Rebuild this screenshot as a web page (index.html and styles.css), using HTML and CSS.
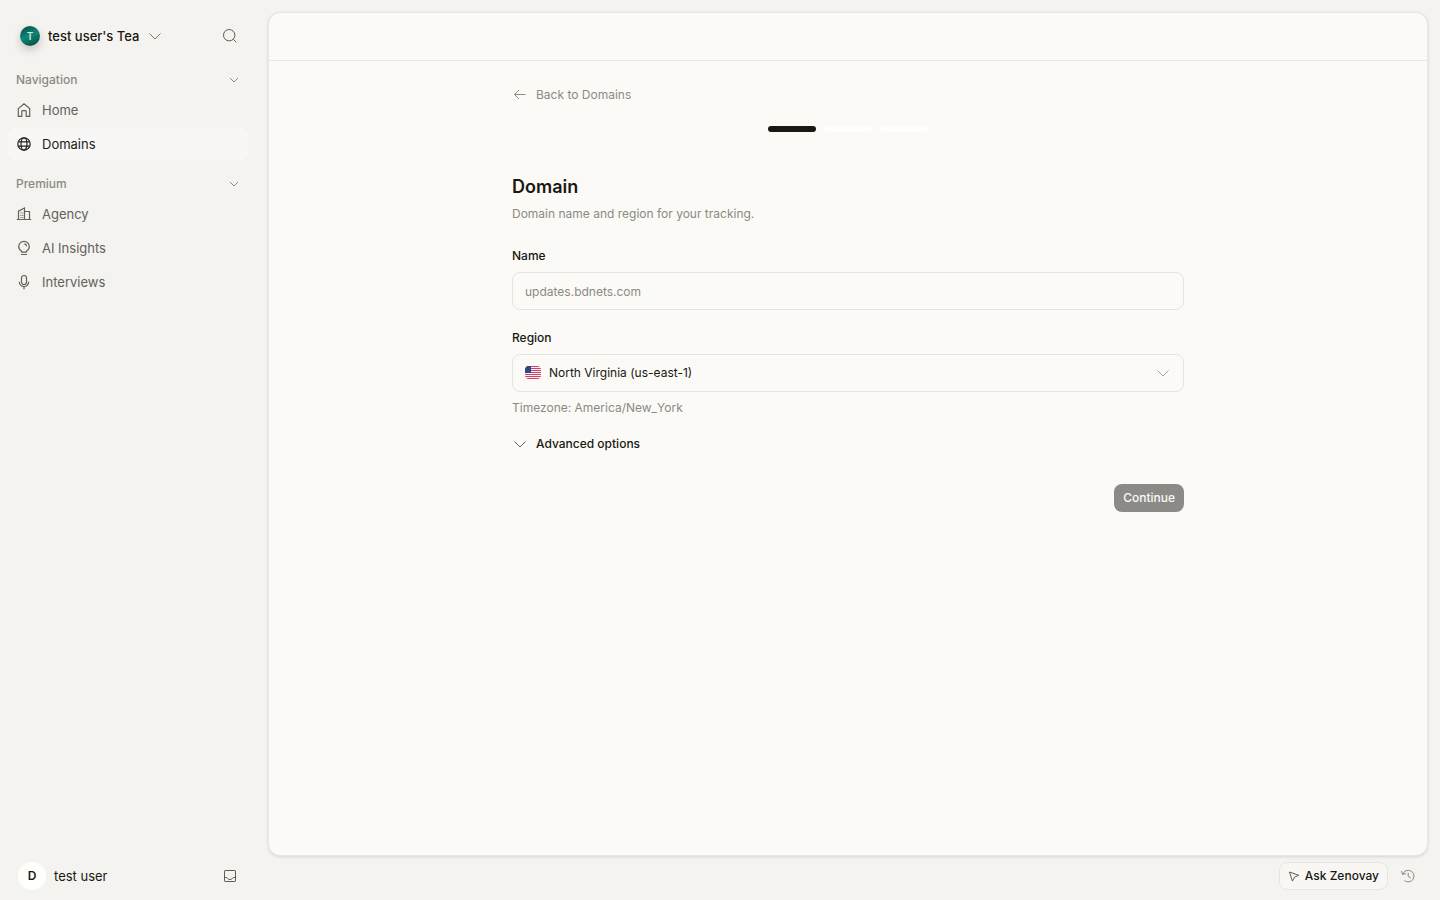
FILE: index.html
```html
<!DOCTYPE html>
<html lang="en">
<head>
    <meta charset="UTF-8">
    <meta name="viewport" content="width=device-width, initial-scale=1.0">
    <title>Domains</title>
    <link rel="stylesheet" href="styles.css">
</head>
<body>
    <div class="app">
        <aside class="sidebar">
            <div class="team">
                <button type="button" class="team-switch">
                    <span class="team-logo">T</span>
                    <span>test user's Tea</span>
                    <svg class="icon team-chevron" viewBox="0 0 16 16"><path d="M2.5 5.5 8 11l5.5-5.5"/></svg>
                </button>
                <button type="button" class="icon-button" aria-label="Search">
                    <svg class="icon" viewBox="0 0 16 16"><circle cx="7.2" cy="7.2" r="5.7"/><path d="m11.3 11.3 3 3"/></svg>
                </button>
            </div>
            <nav class="nav">
                <button type="button" class="nav-group">Navigation
                    <svg class="icon" viewBox="0 0 16 16"><path d="m4 6 4 4 4-4"/></svg>
                </button>
                <a class="nav-link" href="#">
                    <svg class="icon" viewBox="0 0 16 16"><path d="M2.3 6.6 8 1.700l5.700 4.900v7.700h-3.500V9.500a.8.8 0 0 0-.8-.8H6.600a.8.8 0 0 0-.8.800v4.800H2.300z"/></svg>
                    Home
                </a>
                <a class="nav-link active" href="#">
                    <svg class="icon" viewBox="0 0 16 16"><circle cx="8" cy="8" r="6.2"/><ellipse cx="8" cy="8" rx="3" ry="6.2"/><path d="M2.300 5.800h11.400M2.300 10.200h11.400"/></svg>
                    Domains
                </a>
                <button type="button" class="nav-group second">Premium
                    <svg class="icon" viewBox="0 0 16 16"><path d="m4 6 4 4 4-4"/></svg>
                </button>
                <a class="nav-link" href="#">
                    <svg class="icon" viewBox="0 0 16 16"><path d="M.8 13.500h14.400M2.500 13.500V5.200L8.500 2v11.500M8.500 5.500h5v8M4.500 7h1M6.300 7h1M4.500 9.500h1M6.300 9.500h1M4.500 11.500h1M6.300 11.500h1"/></svg>
                    Agency
                </a>
                <a class="nav-link" href="#">
                    <svg class="icon" viewBox="0 0 16 16"><path d="M5.800 12.200v-.9C4 10.400 2.700 8.700 2.700 6.600a5.300 5.300 0 0 1 10.600 0c0 2.100-1.300 3.800-3.100 4.700v.9zM5 14.500h6M8.300 3.800a2.700 2.700 0 0 1 2.400 2.400"/></svg>
                    AI Insights
                </a>
                <a class="nav-link" href="#">
                    <svg class="icon" viewBox="0 0 16 16"><rect x="5.500" y="1.500" width="5" height="9" rx="2.500"/><path d="M3.300 7.800a4.700 4.700 0 0 0 9.400 0M8 12.500v2.700"/></svg>
                    Interviews
                </a>
            </nav>
            <div class="account">
                <button type="button" class="account-button">
                    <span class="avatar">D</span>
                    <span>test user</span>
                </button>
                <button type="button" class="icon-button" aria-label="Inbox">
                    <svg class="icon" viewBox="0 0 16 16"><rect x="2.500" y="2.500" width="11" height="11" rx=".6"/><path d="M2.500 9.500h2.200c.6 0 .8 2 3.300 2s2.700-2 3.300-2h2.200"/></svg>
                </button>
            </div>
        </aside>
        <div class="content">
            <main class="panel">
                <header class="panel-header"></header>
                <form class="domain-form">
                    <a class="back-link" href="#">
                        <svg class="icon" viewBox="0 0 16 16"><path d="M13.500 7.500H2.500M7 3 2.500 7.500 7 12"/></svg>
                        Back to Domains
                    </a>
                    <div class="steps">
                        <span class="step done"></span>
                        <span class="step"></span>
                        <span class="step"></span>
                    </div>
                    <h1>Domain</h1>
                    <p class="intro">Domain name and region for your tracking.</p>
                    <div class="field">
                        <label for="name">Name</label>
                        <input type="text" id="name" name="name" placeholder="updates.bdnets.com">
                    </div>
                    <div class="field">
                        <label for="region">Region</label>
                        <div class="select-box">
                            <svg class="flag" viewBox="0 0 16 13">
                                <clipPath id="flagShape"><rect width="16" height="13" rx="4"/></clipPath>
                                <g clip-path="url(#flagShape)">
                                    <path fill="#f5f1f2" d="M0 0h16v13H0z"/>
                                    <path fill="#d0416a" d="M0 0h16v1H0zM0 2h16v1H0zM0 4h16v1H0zM0 6h16v1H0zM0 8h16v1H0zM0 10h16v1H0zM0 12h16v1H0z"/>
                                    <path fill="#2b4a7e" d="M0 0h6v7H0z"/>
                                </g>
                            </svg>
                            <select id="region" name="region">
                                <option>North Virginia (us-east-1)</option>
                            </select>
                            <svg class="icon select-chevron" viewBox="0 0 16 16"><path d="M2.500 5.500 8 11l5.500-5.500"/></svg>
                        </div>
                        <p class="hint">Timezone: America/New_York</p>
                    </div>
                    <button type="button" class="advanced">
                        <svg class="icon" viewBox="0 0 16 16"><path d="M2.500 5.500 8 11l5.500-5.500"/></svg>
                        Advanced options
                    </button>
                    <div class="actions">
                        <button type="submit" class="continue" disabled>Continue</button>
                    </div>
                </form>
            </main>
            <footer class="bottom-bar">
                <button type="button" class="ask">
                    <svg class="icon" viewBox="0 0 12 12"><path d="m1.500 2 9.300 3.300-4.200 1.800-2.200 4z"/></svg>
                    Ask Zenovay
                </button>
                <button type="button" class="icon-button history" aria-label="History">
                    <svg class="icon" viewBox="0 0 16 16"><path d="M2.700 6.200A5.800 5.800 0 1 1 4.500 12.600M1.500 3l1 3.500L6 5.600M8.200 4.800v3.700l2.600 1.500"/></svg>
                </button>
            </footer>
        </div>
    </div>
</body>
</html>
```

FILE: styles.css
```css
* {
    box-sizing: border-box;
}
body {
    margin: 0;
    background-color: #f4f3ef;
    color: #191813;
    font-family: Inter, "Liberation Sans", sans-serif;
    font-size: 12px;
    line-height: 20px;
}
button,
input,
select {
    font: inherit;
    color: inherit;
}
button {
    padding: 0;
    border: none;
    background: none;
    cursor: pointer;
}
a {
    text-decoration: none;
}
h1,
p {
    margin: 0;
}
.icon {
    width: 16px;
    height: 16px;
    flex: none;
    fill: none;
    stroke: currentColor;
    stroke-width: 1;
}
.app {
    display: flex;
    min-height: 100vh;
}

/* Sidebar */
.sidebar {
    display: flex;
    flex-direction: column;
    width: 256px;
    flex: none;
    padding: 20px 8px 10px;
    font-size: 13px;
}
.team,
.account {
    display: flex;
    align-items: center;
    justify-content: space-between;
    padding: 0 10px;
}
.team {
    height: 32px;
}
.team-switch {
    display: flex;
    align-items: center;
    gap: 8px;
    padding-left: 2px;
    font-weight: 500;
}
.team-logo {
    width: 20px;
    height: 20px;
    border-radius: 50%;
    background: linear-gradient(155deg, #064e46 5%, #128577 48%, #07483f 95%);
    box-shadow: 0 4px 10px rgba(0, 0, 0, 0.2);
    color: #c4e9df;
    font-size: 10px;
    font-weight: 600;
}
.team-chevron {
    color: #77766f;
}
.icon-button {
    display: flex;
    padding: 4px 0;
    color: #5e5d57;
}
.nav {
    flex: 1;
    padding-top: 16px;
}
.nav-group {
    display: flex;
    align-items: center;
    justify-content: space-between;
    width: 100%;
    height: 24px;
    margin-bottom: 2px;
    padding: 0 6px 0 8px;
    color: #8b8a85;
    font-size: 12px;
    font-weight: 500;
}
.nav-group.second {
    margin-top: 12px;
}
.nav-link {
    display: flex;
    align-items: center;
    gap: 10px;
    height: 32px;
    margin-bottom: 2px;
    padding: 0 8px;
    border-radius: 6px;
    color: #62615c;
}
.nav-link .icon {
    stroke-width: 1.2;
}
.nav-link.active {
    background-color: #f8f7f5;
    color: #22211c;
}
.account-button {
    display: flex;
    align-items: center;
    gap: 8px;
}
.avatar {
    width: 28px;
    height: 28px;
    border-radius: 50%;
    background-color: #fefefd;
    font-size: 12px;
    font-weight: 600;
    line-height: 28px;
}

/* Main panel */
.content {
    display: flex;
    flex-direction: column;
    flex: 1;
    padding: 12px 12px 8px;
}
.panel {
    flex: 1;
    border: 1px solid #e7e6e2;
    border-radius: 12px;
    background-color: #fbfaf6;
    box-shadow: 0 1px 3px rgba(0, 0, 0, 0.12);
}
.panel-header {
    height: 48px;
    border-bottom: 1px solid #e9e8e4;
}
.domain-form {
    display: flex;
    flex-direction: column;
    max-width: 672px;
    margin: 0 auto;
    padding: 24px 0;
}
.back-link {
    display: flex;
    align-items: center;
    align-self: flex-start;
    gap: 8px;
    color: #8b8a85;
}
.steps {
    display: flex;
    justify-content: center;
    gap: 8px;
    margin: 21px 0 41px;
}
.step {
    width: 48px;
    height: 6px;
    border-radius: 3px;
    background-color: #fefefd;
}
.step.done {
    background-color: #191813;
}
h1 {
    font-size: 18px;
    font-weight: 600;
    line-height: 28px;
}
.intro {
    margin: 3px 0 22px;
    color: #8b8a85;
}
.field {
    display: flex;
    flex-direction: column;
    gap: 6px;
    margin-bottom: 18px;
}
.field label {
    font-weight: 500;
}
.field input,
.field select {
    width: 100%;
    height: 38px;
    padding: 0 12px;
    border: 1px solid #e4e3df;
    border-radius: 8px;
    background-color: #fbfaf6;
}
.field input::placeholder {
    color: #8b8a85;
}
.select-box {
    position: relative;
}
.field select {
    display: block;
    appearance: none;
    padding: 0 36px;
}
.flag {
    position: absolute;
    top: 12px;
    left: 13px;
    width: 16px;
    height: 13px;
}
.select-chevron {
    position: absolute;
    top: 11px;
    right: 13px;
    color: #a5a49f;
    pointer-events: none;
}
.hint {
    color: #8b8a85;
}
.advanced {
    display: flex;
    align-items: center;
    align-self: flex-start;
    gap: 8px;
    margin-top: -2px;
    font-weight: 500;
}
.advanced .icon {
    color: #5e5d57;
}
.actions {
    display: flex;
    justify-content: flex-end;
    margin-top: 30px;
}
.continue {
    height: 28px;
    padding: 0 9px;
    border-radius: 8px;
    background-color: #8b8a86;
    color: #fbfaf6;
    font-weight: 500;
    cursor: default;
}

/* Bottom bar */
.bottom-bar {
    display: flex;
    align-items: center;
    justify-content: flex-end;
    gap: 12px;
    padding: 6px 12px 2px 0;
}
.ask {
    display: flex;
    align-items: center;
    gap: 5px;
    height: 28px;
    padding: 0 8px;
    border: 1px solid #e6e5e1;
    border-radius: 8px;
    background-color: #f8f7f3;
    font-weight: 500;
}
.ask .icon {
    width: 12px;
    height: 12px;
    color: #5e5d57;
}
.history {
    color: #8b8a85;
}
```
